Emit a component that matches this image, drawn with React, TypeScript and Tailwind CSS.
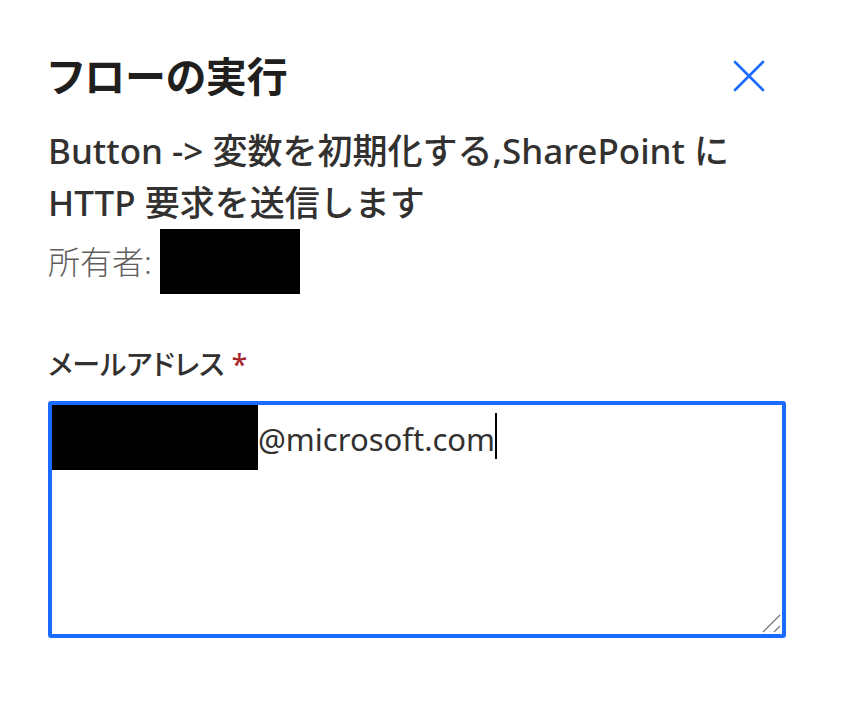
import { FC } from 'react';

const CloseIcon: FC = () => (
  <svg width="32" height="32" viewBox="0 0 32 32" fill="none">
    <path d="M2 2L30 30M30 2L2 30" stroke="#1a6bff" strokeWidth={2.6} strokeLinecap="round" />
  </svg>
);

const ResizeHandle: FC = () => (
  <svg className="absolute right-0 bottom-0" width="24" height="24" viewBox="0 0 24 24" fill="none">
    <path d="M5 22L22 5M16 22L22 16" stroke="#767676" strokeWidth={1.2} />
  </svg>
);

export default function App() {
  return (
    <div className="min-h-screen bg-white pl-12 pr-[56px] pt-[56px] font-['Noto_Sans','Noto_Sans_CJK_JP',sans-serif] text-[#201f1e]">
      <div className="flex items-start justify-between">
        <h1 className="text-[41px] font-semibold leading-none [font-feature-settings:'palt']">
          フローの実行
        </h1>
        <button type="button" className="mt-[4px] mr-[21px]" aria-label="閉じる">
          <CloseIcon />
        </button>
      </div>

      <p className="mt-[28px] text-[35px] font-medium leading-[52px] text-[#323130]">
        Button -&gt; 変数を初期化する,SharePoint に
        <br />
        HTTP 要求を送信します
      </p>

      <div className="flex items-center gap-[8px]">
        <span className="text-[32px] font-light text-[#605e5c]">所有者:</span>
        <div className="h-[65px] w-[140px] bg-black" />
      </div>

      <label className="mt-[56px] block text-[28px] font-medium leading-none text-[#323130] [font-feature-settings:'palt']">
        メールアドレス <span className="text-[#a4262c]">*</span>
      </label>

      <div className="relative mt-[23px] h-[237px] rounded-[3px] border-4 border-[#1a6bff]">
        <div className="flex items-start">
          <div className="h-[65px] w-[206px] bg-black" />
          <span className="mt-[14px] text-[31px] leading-[40px] text-[#323130]">@microsoft.com</span>
          <span className="mt-[8px] h-[46px] w-[2px] bg-black" />
        </div>
        <ResizeHandle />
      </div>
    </div>
  );
}
